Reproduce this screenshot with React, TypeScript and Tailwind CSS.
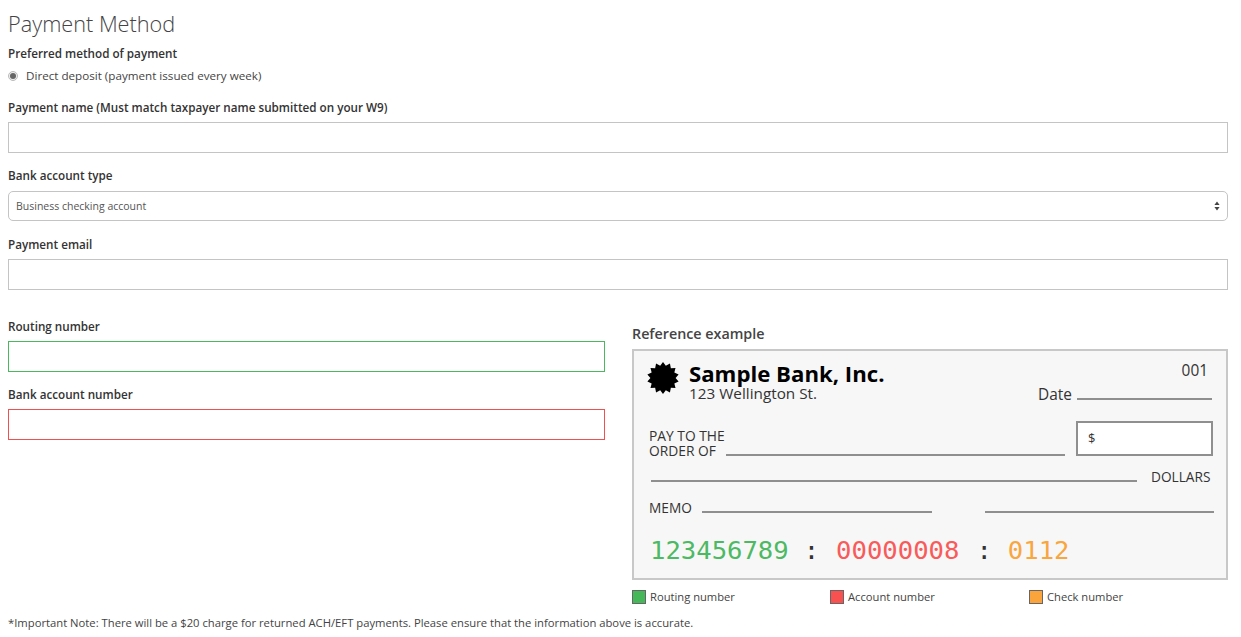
const burst = Array.from({ length: 28 }, (_, i) => {
  const r = i % 2 === 0 ? 16 : 12.6;
  const a = (i / 28) * Math.PI * 2;
  return `${(16 + r * Math.sin(a)).toFixed(2)},${(16 - r * Math.cos(a)).toFixed(2)}`;
}).join(" ");

function Field({ label, className }: { label: string; className: string }) {
  return (
    <div>
      <label className="block text-[11.7px] leading-[17px] font-semibold text-[#333]">{label}</label>
      <input type="text" className={`mt-[6px] block h-[31px] w-full border bg-white ${className}`} />
    </div>
  );
}

function Legend({ color, label, width }: { color: string; label: string; width: string }) {
  return (
    <div className={`flex items-center gap-[4px] ${width}`}>
      <span className={`h-[14px] w-[14px] border border-[#666] ${color}`} />
      <span className="text-[11.2px] leading-[14px] text-[#444]">{label}</span>
    </div>
  );
}

export default function App() {
  return (
    <div className="h-[637px] w-[1241px] overflow-hidden bg-white pl-[8px] pr-[13px] font-['Open_Sans',sans-serif] text-[#333]">
      {/* Header */}
      <h1 className="pt-[9px] text-[21.7px] leading-[30px] font-light text-[#444]">Payment Method</h1>
      <p className="mt-[6px] text-[11.7px] leading-[17px] font-semibold">Preferred method of payment</p>
      <div className="mt-[5px] flex items-center gap-[8px]">
        <span className="flex h-[10px] w-[10px] items-center justify-center rounded-full border border-[#bbb] bg-[#eee]">
          <span className="h-[6px] w-[6px] rounded-full bg-[#666]" />
        </span>
        <span className="text-[11.65px] leading-[17px] text-[#444]">Direct deposit (payment issued every week)</span>
      </div>

      {/* Main fields */}
      <div className="mt-[15px]">
        <Field label="Payment name (Must match taxpayer name submitted on your W9)" className="border-[#c4c4c4]" />
      </div>
      <div className="mt-[14px]">
        <label className="block text-[11.7px] leading-[17px] font-semibold">Bank account type</label>
        <div className="mt-[7px] flex h-[30px] items-center justify-between rounded-[5px] border border-[#c4c4c4] bg-white pr-[7px] pl-[7px]">
          <span className="text-[10.5px] leading-[14px] text-[#555]">Business checking account</span>
          <svg width="6" height="10" viewBox="0 0 6 10" className="text-[#444]">
            <path d="M3 0.5 L5.6 4 H0.4 Z M3 9.5 L0.4 6 H5.6 Z" fill="currentColor" />
          </svg>
        </div>
      </div>
      <div className="mt-[15px]">
        <Field label="Payment email" className="border-[#c4c4c4]" />
      </div>

      {/* Bank details and check */}
      <div className="mt-[26px] flex items-start gap-[27px]">
        <div className="flex w-[597px] flex-col gap-[14px] pt-[2px]">
          <Field label="Routing number" className="border-[#4bb85f]" />
          <Field label="Bank account number" className="border-[#f05050]" />
        </div>
        <div className="w-[596px] pt-[8px]">
          <p className="text-[14.3px] leading-[19px] font-semibold text-[#444]">Reference example</p>
          <div className="mt-[6px] h-[231px] border-2 border-[#c8c8c8] bg-[#f7f7f7] pr-[12px] pl-[15px] text-[#333]">
            <div className="flex h-[54px] items-start">
              <svg width="32" height="32" viewBox="0 0 32 32" className="mt-[11px] ml-[-2px] shrink-0">
                <polygon points={burst} fill="#000" />
              </svg>
              <div className="mt-[12px] ml-[10px] flex-1">
                <p className="text-[22.2px] leading-[22px] font-bold text-black">Sample Bank, Inc.</p>
                <p className="text-[15.3px] leading-[16px]">123 Wellington St.</p>
              </div>
              <div className="w-[176px] shrink-0">
                <p className="mt-[11px] pr-[6px] text-right text-[15.4px] leading-[18px]">001</p>
                <div className="mt-[6px] flex items-end pr-[2px]">
                  <span className="text-[15.4px] leading-[18px]">Date</span>
                  <span className="mb-[4px] ml-[5px] h-[2px] flex-1 bg-[#8f8f8f]" />
                </div>
              </div>
            </div>

            <div className="mt-[16px] flex h-[35px] items-end">
              <p className="mb-[-2px] w-[77px] shrink-0 text-[13.8px] leading-[15px] text-[#333]">
                PAY TO THE
                <br />
                ORDER OF
              </p>
              <span className="h-[2px] w-[339px] bg-[#8f8f8f]" />
              <div className="ml-[11px] flex h-[35px] w-[137px] items-center border-2 border-[#8f8f8f] bg-white pl-[10px] text-[13px]">$</div>
            </div>

            <div className="mt-[12px] flex h-[18px] items-center pl-[2px]">
              <span className="mt-[8px] h-[2px] w-[486px] bg-[#8f8f8f]" />
              <span className="ml-[14px] text-[13.7px] leading-[18px]">DOLLARS</span>
            </div>

            <div className="mt-[13px] flex h-[18px] items-center">
              <span className="text-[13.7px] leading-[18px]">MEMO</span>
              <span className="mt-[8px] ml-[10px] h-[2px] w-[230px] bg-[#8f8f8f]" />
              <span className="mt-[8px] ml-[53px] h-[2px] w-[229px] bg-[#8f8f8f]" />
            </div>

            <div className="mt-[18px] flex items-center pl-[1px] font-['DejaVu_Sans_Mono',monospace] text-[25.6px] leading-[30px]">
              <span className="text-[#4cb963]">123456789</span>
              <span className="ml-[15px] text-[#333]">:</span>
              <span className="ml-[17px] text-[#f95a5a]">00000008</span>
              <span className="ml-[17px] text-[#333]">:</span>
              <span className="ml-[16px] text-[#f9a63f]">0112</span>
            </div>
          </div>

          <div className="mt-[10px] flex">
            <Legend color="bg-[#46b85a]" label="Routing number" width="w-[198px]" />
            <Legend color="bg-[#f95050]" label="Account number" width="w-[199px]" />
            <Legend color="bg-[#fca43c]" label="Check number" width="w-[199px]" />
          </div>
        </div>
      </div>

      <p className="mt-[10px] text-[11.26px] leading-[17px] text-[#444]">
        *Important Note: There will be a $20 charge for returned ACH/EFT payments. Please ensure that the information above is accurate.
      </p>
    </div>
  );
}
